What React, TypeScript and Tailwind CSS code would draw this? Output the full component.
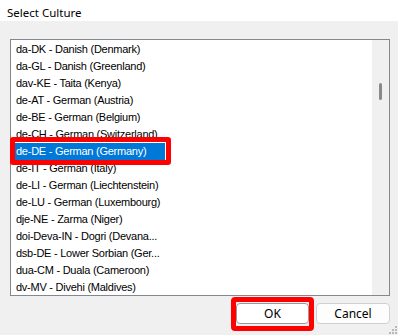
import React from "react";

const rows = [
  "da-DK - Danish (Denmark)",
  "da-GL - Danish (Greenland)",
  "dav-KE - Taita (Kenya)",
  "de-AT - German (Austria)",
  "de-BE - German (Belgium)",
  "de-CH - German (Switzerland)",
  "de-DE - German (Germany)",
  "de-IT - German (Italy)",
  "de-LI - German (Liechtenstein)",
  "de-LU - German (Luxembourg)",
  "dje-NE - Zarma (Niger)",
  "doi-Deva-IN - Dogri (Devana...",
  "dsb-DE - Lower Sorbian (Ger...",
  "dua-CM - Duala (Cameroon)",
  "dv-MV - Divehi (Maldives)",
];

export default function App() {
  return (
    <div
      className="relative w-[398px] h-[335px] bg-[#f0f0f0] flex flex-col overflow-hidden"
      style={{ fontFamily: '"Segoe UI", "Noto Sans", "Liberation Sans", sans-serif' }}
    >
      <div className="h-[21px] bg-white pl-[7px] text-[11.5px] leading-[25px] text-black">
        Select Culture
      </div>
      <div className="mt-[18px] ml-[10px] w-[380px] h-[257px] border border-[#828790] bg-white flex">
        <div
          className="flex-1 pt-[1px] pl-[5px] text-[11px] tracking-[-0.25px] text-black"
          style={{ fontFamily: '"Liberation Sans", Arial, sans-serif' }}
        >
          {rows.map((r, i) =>
            i === 6 ? (
              <div key={r} className="h-[17px] flex items-center">
                <span className="relative z-10 h-[17px] leading-[17px] bg-[#0078d7] text-white pl-[1px] pr-[19px] -ml-[1px]">
                  {r}
                  <span className="absolute top-[-6px] bottom-[-5px] left-[-5px] right-[-6px] border-[5px] border-[#ff0000] rounded-[3px]" />
                </span>
              </div>
            ) : (
              <div key={r} className="h-[17px] leading-[17px] whitespace-nowrap">
                {r}
              </div>
            )
          )}
        </div>
        <div className="w-[17px] bg-[#f0f0f0] relative">
          <div className="absolute left-[7px] top-[43px] w-[3px] h-[17px] rounded-full bg-[#8a8a8a]" />
        </div>
      </div>
      <div className="mt-[7px] flex justify-end pr-[8px] gap-[7px] text-[12px] text-black">
        <div className="relative w-[73px] h-[21px]">
          <button className="w-full h-full bg-white border border-[#9a9a9a] rounded-[4px] leading-[19px]">
            OK
          </button>
          <span className="absolute top-[-6px] bottom-[-7px] left-[-5px] right-[-5px] border-[5px] border-[#ff0000] rounded-[4px]" />
        </div>
        <button className="w-[74px] h-[21px] bg-[#fdfdfd] border border-[#d0d0d0] rounded-[4px] leading-[19px]">
          Cancel
        </button>
      </div>
      <svg className="absolute right-[1px] bottom-[1px]" width="8" height="8" viewBox="0 0 8 8">
        <rect x="6" y="0" width="2" height="2" fill="#b8b8b8" />
        <rect x="3" y="3" width="2" height="2" fill="#b8b8b8" />
        <rect x="6" y="3" width="2" height="2" fill="#b8b8b8" />
        <rect x="0" y="6" width="2" height="2" fill="#b8b8b8" />
        <rect x="3" y="6" width="2" height="2" fill="#b8b8b8" />
        <rect x="6" y="6" width="2" height="2" fill="#b8b8b8" />
      </svg>
    </div>
  );
}
